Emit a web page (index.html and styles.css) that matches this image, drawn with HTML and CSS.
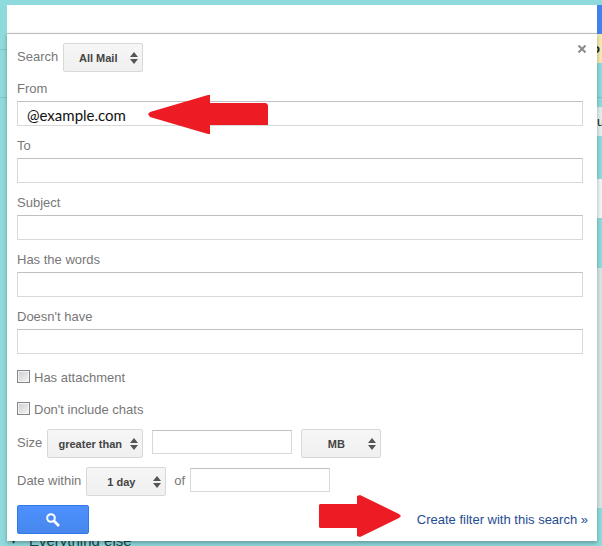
FILE: index.html
```html
<!DOCTYPE html>
<html lang="en">
<head>
    <meta charset="UTF-8">
    <meta name="viewport" content="width=device-width, initial-scale=1.0">
    <title>Mail search</title>
    <link rel="stylesheet" href="styles.css">
</head>
<body>

    <!-- mailbox behind the search popup -->
    <div class="mailbox">
        <div class="bar top-bar"></div>
        <div class="bar search-bar"><span class="chip blue"></span></div>
        <div class="bar notice-bar"><span class="chip notice">o</span></div>
        <div class="bar nav-bar"></div>
        <div class="bar space-bar"></div>
        <div class="bar tool-bar"><span class="chip tool">u</span></div>
        <div class="bar gap-bar"></div>
        <div class="bar tabs-bar"><span class="chip tabs"></span></div>
        <div class="bar wide-bar"></div>
        <div class="bar list-bar"><span class="chip list"></span></div>
        <div class="bar section-bar"><span class="caret">▾</span> Everything else</div>
    </div>

    <div class="popup">
        <input class="search-box" type="text" aria-label="Search mail">

        <form class="panel">
            <button class="close" type="button" aria-label="Close">
                <svg width="8" height="8" viewBox="0 0 8 8"><path d="M0.5 0.5l7 7M7.5 0.5l-7 7" stroke="#8a8a8a" stroke-width="2" fill="none"/></svg>
            </button>

            <div class="row">
                <label for="scope">Search</label>
                <span class="select">
                    <select id="scope"><option>All Mail</option></select>
                    <svg class="arrows" width="8" height="12" viewBox="0 0 8 12"><path d="M4 0l4 5H0zM4 12L0 7h8z" fill="#555"/></svg>
                </span>
            </div>

            <div class="field">
                <label for="from">From</label>
                <input class="from" id="from" type="text" value="@example.com">
                <svg class="pointer pointer-from" width="120" height="40" viewBox="0 0 120 40"><path d="M0 19L2 17L60 0h2v8h56l2 2v20H62v9h-2L2 22z" fill="#ed1c24"/></svg>
            </div>
            <div class="field">
                <label for="to">To</label>
                <input id="to" type="text">
            </div>
            <div class="field">
                <label for="subject">Subject</label>
                <input id="subject" type="text">
            </div>
            <div class="field">
                <label for="has">Has the words</label>
                <input id="has" type="text">
            </div>
            <div class="field">
                <label for="hasnot">Doesn't have</label>
                <input id="hasnot" type="text">
            </div>

            <div class="check">
                <input id="attachment" type="checkbox">
                <label for="attachment">Has attachment</label>
            </div>
            <div class="check">
                <input id="chats" type="checkbox">
                <label for="chats">Don't include chats</label>
            </div>

            <div class="row">
                <label for="compare">Size</label>
                <span class="select wide">
                    <select id="compare"><option>greater than</option></select>
                    <svg class="arrows" width="8" height="12" viewBox="0 0 8 12"><path d="M4 0l4 5H0zM4 12L0 7h8z" fill="#555"/></svg>
                </span>
                <input class="short size" type="text" aria-label="Size value">
                <span class="select">
                    <select aria-label="Size unit"><option>MB</option></select>
                    <svg class="arrows" width="8" height="12" viewBox="0 0 8 12"><path d="M4 0l4 5H0zM4 12L0 7h8z" fill="#555"/></svg>
                </span>
            </div>

            <div class="row">
                <label for="within">Date within</label>
                <span class="select">
                    <select id="within"><option>1 day</option></select>
                    <svg class="arrows" width="8" height="12" viewBox="0 0 8 12"><path d="M4 0l4 5H0zM4 12L0 7h8z" fill="#555"/></svg>
                </span>
                <label class="of" for="date">of</label>
                <input class="short" id="date" type="text">
            </div>

            <div class="footer">
                <button class="submit" type="submit" aria-label="Search">
                    <svg width="14" height="14" viewBox="0 0 14 14"><circle cx="5" cy="5" r="3.8" fill="none" stroke="#fff" stroke-width="2"/><path d="M8 8l5 5" stroke="#fff" stroke-width="2.6"/></svg>
                </button>
                <div class="create">
                    <svg class="pointer pointer-create" width="82" height="42" viewBox="0 0 82 42"><path d="M1 9h37V1l3-1l39 19l2 2l-2 2l-39 19l-3-1v-8H1l-1-1V10z" fill="#ed1c24"/></svg>
                    <a href="#">Create filter with this search »</a>
                </div>
            </div>
        </form>
    </div>

</body>
</html>
```
FILE: styles.css
```css
* {
    margin: 0;
    padding: 0;
    box-sizing: border-box;
}

body {
    position: relative;
    min-height: 100vh;
    overflow: hidden;
    background-color: #8fdadd;
    color: #777;
    font-family: "Liberation Sans", Arial, sans-serif;
    font-size: 13px;
    line-height: 16px;
}

/* mailbox */
.mailbox {
    height: 100vh;
    overflow: hidden;
}

.bar {
    display: flex;
    justify-content: flex-end;
}

.top-bar {
    height: 5px;
}

.search-bar {
    height: 29px;
}

.notice-bar {
    height: 29px;
    background: linear-gradient(#7bc6ca, #7bc6ca) 0 15px / 100% 1px no-repeat;
}

.nav-bar {
    height: 35px;
    border-bottom: 1px solid #7bc6ca;
}

.space-bar {
    height: 9px;
}

.tool-bar {
    height: 29px;
}

.gap-bar {
    height: 43px;
}

.tabs-bar {
    height: 39px;
}

.wide-bar {
    height: 50px;
}

.list-bar {
    height: 240px;
}

.chip {
    width: 5px;
    overflow: hidden;
    color: #222;
    line-height: 30px;
}

.blue {
    background-color: #4480ea;
}

.notice {
    padding-right: 2px;
    background-color: #f5e9b0;
    font-weight: bold;
    direction: rtl;
}

.tool {
    background-color: #e0eeed;
}

.tabs {
    background-color: #eef5f4;
}

.list {
    background-color: #d6e6e5;
}

.section-bar {
    justify-content: flex-start;
    gap: 8px;
    padding: 25px 0 0 11px;
    color: #1d4548;
    font-size: 15px;
}

.caret {
    width: 10px;
    font-size: 10px;
}

/* search popup */
.popup {
    position: absolute;
    top: 5px;
    left: 7px;
    right: 5px;
}

input[type="text"] {
    border: 1px solid #d9d9d9;
    border-top-color: #c0c0c0;
    background-color: #fff;
    outline: none;
}

.popup .search-box {
    display: block;
    width: 100%;
    height: 28px;
    border: none;
}

.panel {
    position: relative;
    padding: 9px 14px 7px 10px;
    border-top: 1px solid #bbb;
    background-color: #fff;
    box-shadow: 0 2px 4px rgba(0, 0, 0, 0.3);
}

.close {
    position: absolute;
    top: 11px;
    right: 11px;
    width: 8px;
    height: 8px;
    border: none;
    background: none;
    cursor: pointer;
}

.close svg {
    display: block;
}

.row {
    display: flex;
    align-items: flex-start;
    margin-bottom: 9px;
}

.row label {
    margin-right: 5px;
    padding-top: 6px;
}

.select {
    position: relative;
    width: 80px;
}

.select.wide {
    width: 96px;
}

.select select {
    display: block;
    width: 100%;
    height: 29px;
    padding-right: 10px;
    border: 1px solid #d8d8d8;
    border-radius: 2px;
    appearance: none;
    background: linear-gradient(#f6f6f6, #f0f0f0);
    color: #444;
    font-family: inherit;
    font-size: 11px;
    font-weight: bold;
    text-align: center;
    text-align-last: center;
}

.arrows {
    position: absolute;
    top: 9px;
    right: 5px;
    pointer-events: none;
}

.short {
    width: 140px;
    height: 24px;
    margin-top: 1px;
}

.size {
    margin: 1px 9px 0;
}

.row .of {
    margin-left: 8px;
}

.field {
    position: relative;
    margin-bottom: 12px;
}

.field label {
    display: block;
    margin-bottom: 4px;
}

.field input {
    display: block;
    width: 100%;
    height: 25px;
    padding: 3px 9px 0;
}

.field .from {
    color: #111;
    font-family: Lato, sans-serif;
    font-size: 15px;
}

.pointer {
    position: absolute;
}

.pointer-from {
    top: 14px;
    left: 131px;
}

.check {
    display: flex;
    align-items: flex-start;
    gap: 4px;
    margin: 16px 0;
}

.check + .check {
    margin-bottom: 11px;
}

.check input {
    width: 13px;
    height: 13px;
    border: 1px solid #858585;
    appearance: none;
    background: linear-gradient(135deg, #c9cdd2, #f6f6f6);
    box-shadow: inset 0 0 0 1px #f4f4f4;
}

.footer {
    display: flex;
    justify-content: space-between;
    margin-right: -5px;
}

.submit {
    display: flex;
    align-items: center;
    justify-content: center;
    width: 72px;
    height: 29px;
    border: 1px solid #3079ed;
    border-radius: 2px;
    background: linear-gradient(#4d90fe, #4787ed);
    cursor: pointer;
}

.create {
    position: relative;
    padding-top: 7px;
}

.create a {
    color: #1f4c92;
    text-decoration: none;
}

.pointer-create {
    top: -10px;
    right: 100%;
    margin-right: 16px;
}
```
